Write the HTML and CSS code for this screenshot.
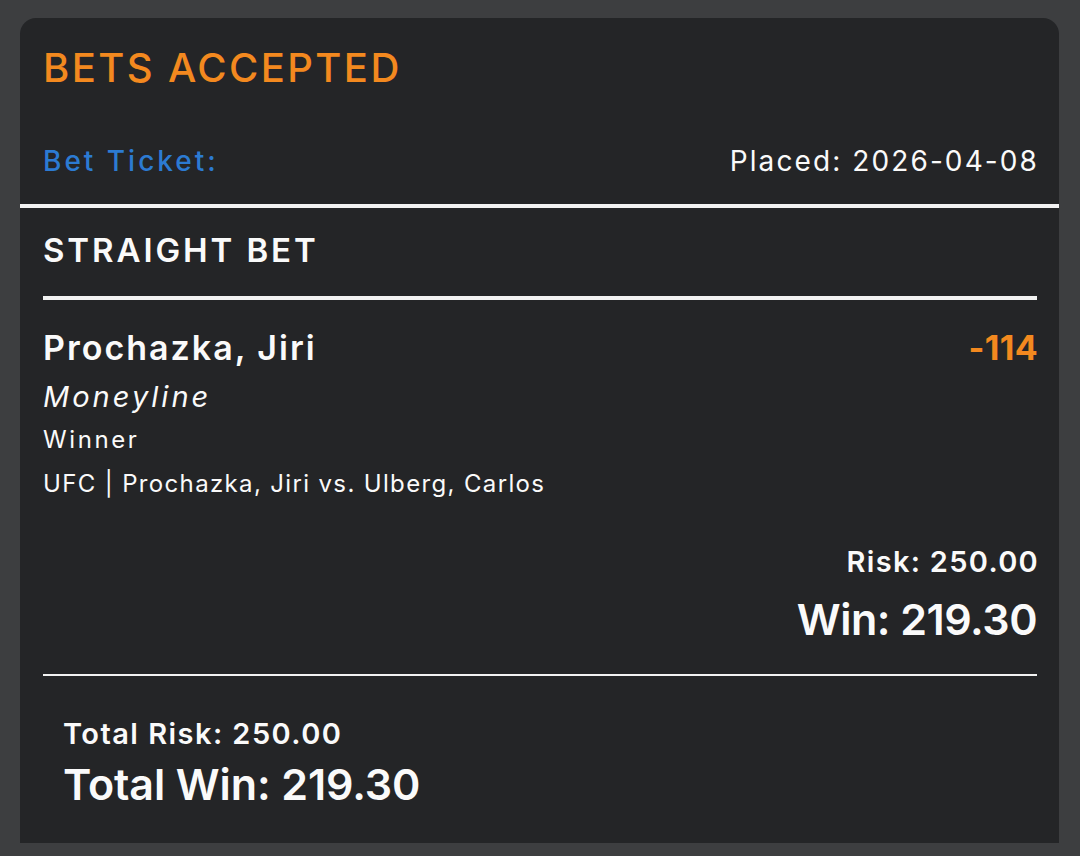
FILE: index.html
```html
<!DOCTYPE html>
<html lang="en">
<head>
<meta charset="utf-8">
<title>Bets Accepted</title>
<link rel="stylesheet" href="styles.css">
</head>
<body>
<main class="card">
  <header class="card-head">
    <h1 class="title">BETS ACCEPTED</h1>
    <div class="ticket-row">
      <span class="ticket-label">Bet Ticket:</span>
      <span class="placed">Placed: 2026-04-08</span>
    </div>
  </header>
  <section class="bet">
    <h2 class="bet-type">STRAIGHT BET</h2>
    <div class="selection">
      <div class="sel-top">
        <span class="sel-name">Prochazka, Jiri</span>
        <span class="odds">-114</span>
      </div>
      <div class="market">Moneyline</div>
      <div class="detail winner">Winner</div>
      <div class="detail event">UFC | Prochazka, Jiri vs. Ulberg, Carlos</div>
      <div class="amounts">
        <div class="risk">Risk: 250.00</div>
        <div class="win">Win: 219.30</div>
      </div>
    </div>
  </section>
  <footer class="totals">
    <div class="total-risk">Total Risk: 250.00</div>
    <div class="total-win">Total Win: 219.30</div>
  </footer>
</main>
</body>
</html>
```
FILE: styles.css
```css
html, body {
  margin: 0;
  background: #3d3e40;
}
body {
  font-family: Inter, "Open Sans", "DejaVu Sans", sans-serif;
  color: #fafafa;
  padding-top: 18px;
}
.card {
  margin: 0 21px 0 20px;
  background: #242527;
  border-radius: 16px 16px 0 0;
}
.card-head {
  padding: 30px 22px 29px 23px;
  border-bottom: 4px solid #f2f2f2;
}
.title {
  margin: 0;
  font-size: 40px;
  line-height: 40px;
  font-weight: 500;
  color: #f3891f;
  letter-spacing: 2.4px;
}
.ticket-row {
  margin-top: 59px;
  display: flex;
  justify-content: space-between;
  font-size: 28px;
  line-height: 28px;
}
.ticket-label {
  color: #2c7bd2;
  font-weight: 500;
  letter-spacing: 3px;
}
.placed {
  font-weight: 400;
  letter-spacing: 2.1px;
  margin-right: -2px;
}
.bet {
  padding: 0 22px 0 23px;
}
.bet-type {
  margin: 0;
  padding: 26px 0 29px;
  font-size: 33px;
  line-height: 33px;
  font-weight: 600;
  letter-spacing: 2.9px;
  border-bottom: 4px solid #f2f2f2;
}
.selection {
  padding: 31px 0 33px;
  border-bottom: 2px solid #f2f2f2;
}
.sel-top {
  display: flex;
  justify-content: space-between;
  font-size: 34px;
  line-height: 34px;
  font-weight: 600;
}
.sel-name {
  letter-spacing: 2px;
}
.odds {
  color: #f3891f;
  font-weight: 700;
  letter-spacing: 0.3px;
  margin-right: -1px;
}
.market {
  margin-top: 17px;
  font-size: 29px;
  line-height: 29px;
  font-style: italic;
  letter-spacing: 3px;
}
.detail {
  margin-top: 17px;
  font-size: 24px;
  line-height: 24px;
}
.detail.winner {
  letter-spacing: 2.6px;
}
.detail.event {
  margin-top: 20px;
  letter-spacing: 1.35px;
}
.amounts {
  margin-top: 51px;
  text-align: right;
  font-weight: 600;
}
.risk {
  font-size: 29px;
  line-height: 29px;
  letter-spacing: 1.3px;
  margin-right: -2px;
}
.win {
  margin-top: 22px;
  font-size: 43px;
  line-height: 43px;
  letter-spacing: -0.5px;
}
.totals {
  padding: 43px 22px 37px 43px;
  font-weight: 600;
}
.total-risk {
  font-size: 29px;
  line-height: 29px;
  letter-spacing: 1.45px;
}
.total-win {
  margin-top: 15px;
  font-size: 43px;
  line-height: 43px;
  letter-spacing: -0.1px;
}
```
